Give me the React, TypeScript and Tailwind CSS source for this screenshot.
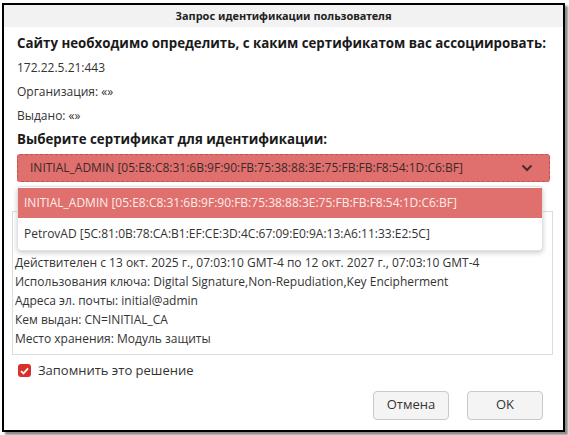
import React from "react";

export default function App() {
  const lines = [
    "Действителен с 13 окт. 2025 г., 07:03:10 GMT-4 по 12 окт. 2027 г., 07:03:10 GMT-4",
    "Использования ключа: Digital Signature,Non-Repudiation,Key Encipherment",
    "Адреса эл. почты: initial@admin",
    "Кем выдан: CN=INITIAL_CA",
    "Место хранения: Модуль защиты",
  ];
  return (
    <div
      className="w-[569px] h-[435px] bg-white pl-[2px] pt-[3px] overflow-hidden"
      style={{ fontFamily: '"Open Sans", "Noto Sans", sans-serif' }}
    >
      <div className="relative w-[563px] h-[429px] border-2 border-black bg-white shadow-[3px_3px_2px_rgba(0,0,0,0.45)] flex flex-col">
        <div
          className="h-[22px] bg-[#f2f2f2] flex items-center justify-center text-[11px] font-bold text-[#222]"
          style={{ fontFamily: '"Noto Sans", sans-serif' }}
        >
          Запрос идентификации пользователя
        </div>
        <div className="flex flex-col pl-[13px] pr-[6px] pt-[5px] text-[#333]">
          <div className="text-[13.3px] font-bold leading-[23.5px] text-[#1a1a1a] whitespace-nowrap">
            Сайту необходимо определить, с каким сертификатом вас ассоциировать:
          </div>
          <div className="text-[12px] leading-[24px]">172.22.5.21:443</div>
          <div className="text-[12px] leading-[24px]">Организация: «»</div>
          <div className="text-[12px] leading-[24px]">Выдано: «»</div>
          <div className="text-[13.3px] font-bold leading-[22.5px] text-[#1a1a1a]">
            Выберите сертификат для идентификации:
          </div>
          <div className="mt-[4px] h-[28px] w-[533px] rounded-[3px] bg-[#e0706d] border border-dashed border-[#c2504d] flex items-center pl-[12px] pr-[10px] text-[12px] text-[#3b2a2a]">
            <span className="flex-1 whitespace-nowrap">
              INITIAL_ADMIN [05:E8:C8:31:6B:9F:90:FB:75:38:88:3E:75:FB:FB:F8:54:1D:C6:BF]
            </span>
            <svg width="12" height="8" viewBox="0 0 12 8" className="mr-[6px]">
              <path d="M1.5 1.5 L6 6 L10.5 1.5" fill="none" stroke="#4a2a2a" strokeWidth="2" />
            </svg>
          </div>
          <div className="ml-[-5px] mt-[29px] w-[541px] h-[144px] border border-[#dcdcdc] pt-[41px] pl-[2px] text-[12px] leading-[19px]">
            {lines.map((l) => (
              <div key={l} className="whitespace-nowrap">
                {l}
              </div>
            ))}
          </div>
          <div className="mt-[6px] flex items-center gap-[7px] pl-[1px]">
            <div className="w-[13px] h-[13px] rounded-[3px] bg-[#d8302b] flex items-center justify-center">
              <svg width="9" height="8" viewBox="0 0 9 8">
                <path d="M1 4.2 L3.4 6.5 L8 1.3" fill="none" stroke="white" strokeWidth="1.8" />
              </svg>
            </div>
            <span className="text-[13px] text-[#333]">Запомнить это решение</span>
          </div>
          <div className="mt-[10px] flex justify-end gap-[18px] pr-[14px]">
            <button className="w-[76px] h-[29px] rounded-[4px] bg-[#f4f4f4] border border-[#c9c9c9] text-[13px] text-[#333]">
              Отмена
            </button>
            <button className="w-[76px] h-[29px] rounded-[4px] bg-[#f4f4f4] border border-[#c9c9c9] text-[13px] text-[#333]">
              OK
            </button>
          </div>
        </div>
        <div className="absolute left-[13px] top-[181px] w-[526px] rounded-[4px] bg-white border border-[#e2e2e2] shadow-[0_2px_5px_rgba(0,0,0,0.2)] py-[1px] text-[12px]">
          <div className="h-[30px] bg-[#e0706d] flex items-center pl-[6px] text-[#fdeceb] whitespace-nowrap">
            INITIAL_ADMIN [05:E8:C8:31:6B:9F:90:FB:75:38:88:3E:75:FB:FB:F8:54:1D:C6:BF]
          </div>
          <div className="h-[31px] flex items-center pl-[6px] text-[#333] whitespace-nowrap">
            PetrovAD [5C:81:0B:78:CA:B1:EF:CE:3D:4C:67:09:E0:9A:13:A6:11:33:E2:5C]
          </div>
        </div>
      </div>
    </div>
  );
}
